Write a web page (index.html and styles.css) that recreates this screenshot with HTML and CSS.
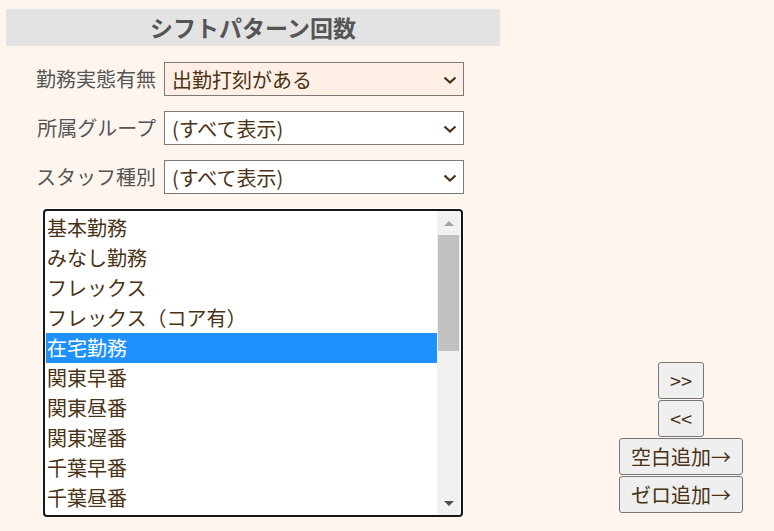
FILE: index.html
```html
<!DOCTYPE html>
<html lang="ja">
<head>
<meta charset="utf-8">
<title>シフトパターン回数</title>
<link rel="stylesheet" href="styles.css">
</head>
<body>
<div class="page">
  <div class="panel">
    <div class="title">シフトパターン回数</div>
    <div class="filters">
      <div class="label">勤務実態有無</div>
      <div class="select select-active"><span>出勤打刻がある</span><svg class="chev" width="14" height="8" viewBox="0 0 14 8"><path d="M1.5 1.5 L7 6.5 L12.5 1.5" fill="none" stroke="#4a2f12" stroke-width="2.2"/></svg></div>
      <div class="label">所属グループ</div>
      <div class="select"><span>(すべて表示)</span><svg class="chev" width="14" height="8" viewBox="0 0 14 8"><path d="M1.5 1.5 L7 6.5 L12.5 1.5" fill="none" stroke="#4a2f12" stroke-width="2.2"/></svg></div>
      <div class="label">スタッフ種別</div>
      <div class="select"><span>(すべて表示)</span><svg class="chev" width="14" height="8" viewBox="0 0 14 8"><path d="M1.5 1.5 L7 6.5 L12.5 1.5" fill="none" stroke="#4a2f12" stroke-width="2.2"/></svg></div>
    </div>
    <div class="listbox">
      <div class="options">
        <div class="opt">基本勤務</div>
        <div class="opt">みなし勤務</div>
        <div class="opt">フレックス</div>
        <div class="opt">フレックス（コア有）</div>
        <div class="opt selected">在宅勤務</div>
        <div class="opt">関東早番</div>
        <div class="opt">関東昼番</div>
        <div class="opt">関東遅番</div>
        <div class="opt">千葉早番</div>
        <div class="opt">千葉昼番</div>
      </div>
      <div class="scrollbar">
        <div class="arrow arrow-up"></div>
        <div class="track"><div class="thumb"></div></div>
        <div class="arrow arrow-down"></div>
      </div>
    </div>
  </div>
  <div class="controls">
    <button class="btn">&gt;&gt;</button>
    <button class="btn">&lt;&lt;</button>
    <button class="btn">空白追加→</button>
    <button class="btn">ゼロ追加→</button>
  </div>
</div>
</body>
</html>
```
FILE: styles.css
```css
html, body {
  margin: 0;
  padding: 0;
  background: #fff5ef;
}
body {
  font-family: "Noto Sans CJK JP", "Noto Sans", sans-serif;
  color: #4a3215;
  font-size: 20px;
}
.page {
  display: flex;
  align-items: flex-end;
  padding: 9px 0 0 6px;
}
.panel {
  width: 494px;
}
.title {
  background: #e3e3e3;
  height: 37px;
  line-height: 37px;
  text-align: center;
  font-size: 23px;
  font-weight: bold;
  color: #555555;
}
.filters {
  display: grid;
  grid-template-columns: 150px 300px;
  column-gap: 8px;
  row-gap: 15px;
  margin-top: 16px;
}
.label {
  text-align: right;
  color: #555555;
  height: 34px;
  line-height: 34px;
}
.select {
  box-sizing: border-box;
  height: 34px;
  border: 1px solid #7a7a7a;
  background: #ffffff;
  display: flex;
  align-items: center;
  justify-content: space-between;
  padding: 0 6px 0 7px;
  color: #4a3215;
}
.select-active {
  background: #ffefe5;
}
.chev {
  display: block;
  margin-top: 1px;
}
.listbox {
  margin: 15px 0 0 37px;
  width: 420px;
  box-sizing: border-box;
  border: 2px solid #161616;
  border-radius: 4px;
  box-shadow: 0 0 0 1px #ffffff;
  background: #ffffff;
  display: flex;
  padding: 2px 1px;
}
.options {
  width: 391px;
}
.opt {
  height: 30px;
  line-height: 30px;
  padding-left: 1px;
  white-space: nowrap;
}
.opt.selected {
  background: #1e90ff;
  color: #ffffff;
}
.scrollbar {
  width: 23px;
  background: #f1f1f1;
  display: flex;
  flex-direction: column;
  margin: -2px 0;
}
.arrow {
  height: 24px;
  display: flex;
  align-items: center;
  justify-content: center;
}
.arrow::before {
  content: "";
  width: 0;
  height: 0;
  border-left: 5px solid transparent;
  border-right: 5px solid transparent;
}
.arrow-up::before {
  border-bottom: 5px solid #a3a3a3;
}
.arrow-down::before {
  border-top: 5px solid #505050;
}
.track {
  flex: 1;
  padding: 0 1px;
}
.thumb {
  height: 116px;
  background: #c1c1c1;
}
.controls {
  margin-left: 119px;
  margin-bottom: 4px;
  width: 124px;
  display: flex;
  flex-direction: column;
  align-items: center;
  gap: 1px;
}
.btn {
  font-family: "Noto Sans CJK JP", "Noto Sans", sans-serif;
  font-size: 20px;
  color: #4a3215;
  background: #efefef;
  border: 1px solid #767676;
  border-radius: 3px;
  height: 37px;
  padding: 0 11px;
  line-height: 29px;
  margin: 0;
}
```
